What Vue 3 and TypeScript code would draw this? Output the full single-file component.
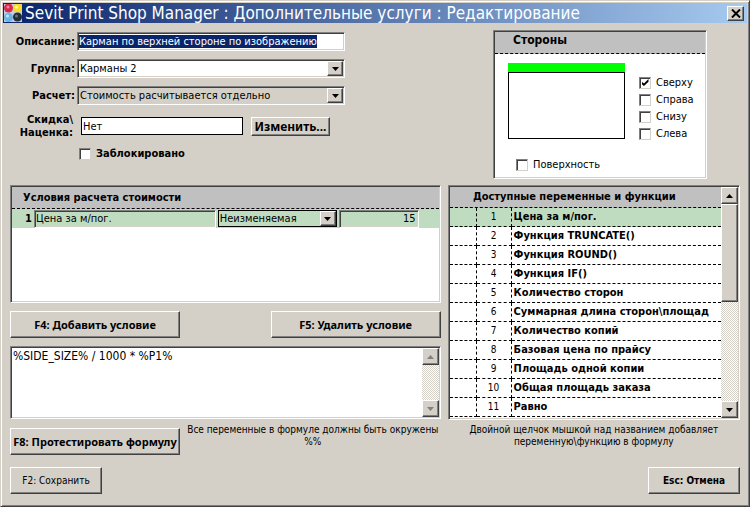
<script setup lang="ts">
import { onMounted, ref } from 'vue'

interface SideOption {
  id: string
  label: string
  checked: boolean
}

const description = ref('Карман по верхней стороне по изображению')
const group = ref('Карманы 2')
const calculation = ref('Стоимость расчитывается отдельно')
const discount = ref('Нет')
const blocked = ref(false)
const surface = ref(false)
const formula = ref('%SIDE_SIZE% / 1000 * %P1%')
const conditionName = ref('Цена за м/пог.')
const conditionKind = ref('Неизменяемая')
const conditionValue = ref('15')
const selectedIndex = ref(0)

const sides = ref<SideOption[]>([
  { id: 'top', label: 'Сверху', checked: true },
  { id: 'right', label: 'Справа', checked: false },
  { id: 'bottom', label: 'Снизу', checked: false },
  { id: 'left', label: 'Слева', checked: false },
])

const variables: string[] = [
  'Цена за м/пог.',
  'Функция TRUNCATE()',
  'Функция ROUND()',
  'Функция IF()',
  'Количество сторон',
  'Суммарная длина сторон\\площад',
  'Количество копий',
  'Базовая цена по прайсу',
  'Площадь одной копии',
  'Общая площадь заказа',
  'Равно',
]

const descriptionInput = ref<HTMLInputElement | null>(null)

onMounted(() => {
  descriptionInput.value?.focus()
  descriptionInput.value?.select()
})
</script>

<template>
  <main class="window">
    <header class="titlebar">
      <svg class="logo" viewBox="0 0 18 18" aria-hidden="true">
        <rect width="18" height="18" fill="#c4cce4" />
        <circle cx="4.5" cy="4" r="4.5" fill="#d8284c" />
        <circle cx="13.5" cy="4" r="4.5" fill="#f4dc28" />
        <circle cx="4.5" cy="13.5" r="4.5" fill="#6cb4e4" />
        <circle cx="13.5" cy="13" r="4.5" fill="#242c34" />
        <circle cx="4" cy="3" r="1.5" fill="#f080a0" />
        <circle cx="12.5" cy="3" r="1.5" fill="#fff69c" />
        <circle cx="3.5" cy="12" r="1.5" fill="#c4e8fc" />
        <circle cx="12.5" cy="12" r="1.5" fill="#68747c" />
      </svg>
      <h1>Sevit Print Shop Manager : Дополнительные услуги : Редактирование</h1>
      <button class="close" type="button" aria-label="Закрыть">
        <svg viewBox="0 0 10 9"><path d="M1 0.5 9 8.5M9 0.5 1 8.5" stroke="#000" stroke-width="2" /></svg>
      </button>
    </header>

    <div class="body">
      <form class="details" @submit.prevent>
        <label for="description">Описание:</label>
        <input id="description" ref="descriptionInput" v-model="description" class="sunken" type="text" />

        <label for="group">Группа:</label>
        <span class="combo sunken">
          <select id="group" v-model="group"><option>Карманы 2</option></select>
          <span class="arrow"><svg viewBox="0 0 7 4"><path d="M0 0H7L3.5 4Z" /></svg></span>
        </span>

        <label for="calculation">Расчет:</label>
        <span class="combo sunken locked">
          <select id="calculation" v-model="calculation"><option>Стоимость расчитывается отдельно</option></select>
          <span class="arrow"><svg viewBox="0 0 7 4"><path d="M0 0H7L3.5 4Z" /></svg></span>
        </span>

        <label class="two-line" for="discount">Скидка\<br />Наценка:</label>
        <span class="discount">
          <input id="discount" v-model="discount" type="text" />
          <button class="button" type="button">Изменить...</button>
        </span>

        <label class="check blocked"><input v-model="blocked" type="checkbox" />Заблокировано</label>
      </form>

      <section class="sides sunken">
        <h2>Стороны</h2>
        <div class="sides-body">
          <div class="preview"><div class="edge"></div><div class="sheet"></div></div>
          <div class="side-list">
            <label v-for="side in sides" :key="side.id" class="check">
              <input v-model="side.checked" type="checkbox" />{{ side.label }}
            </label>
          </div>
          <label class="check surface"><input v-model="surface" type="checkbox" />Поверхность</label>
        </div>
      </section>

      <div class="editor">
        <section class="conditions sunken">
          <h2>Условия расчета стоимости</h2>
          <div class="condition">
            <b>1</b>
            <input v-model="conditionName" class="sunken name" type="text" aria-label="Название условия" />
            <span class="combo kind">
              <select v-model="conditionKind" aria-label="Тип условия"><option>Неизменяемая</option></select>
              <span class="arrow"><svg viewBox="0 0 7 4"><path d="M0 0H7L3.5 4Z" /></svg></span>
            </span>
            <input v-model="conditionValue" class="sunken value" type="text" aria-label="Значение" />
          </div>
        </section>
        <div class="actions">
          <button class="button wide" type="button">F4: Добавить условие</button>
          <button class="button wide" type="button">F5: Удалить условие</button>
        </div>
        <div class="formula sunken">
          <textarea v-model="formula" aria-label="Формула"></textarea>
          <div class="scroll idle">
            <button class="arrow" type="button" aria-label="Вверх"><svg viewBox="0 0 7 4"><path d="M0 4H7L3.5 0Z" /></svg></button>
            <button class="arrow" type="button" aria-label="Вниз"><svg viewBox="0 0 7 4"><path d="M0 0H7L3.5 4Z" /></svg></button>
          </div>
        </div>
      </div>

      <section class="variables sunken">
        <table>
          <colgroup><col class="mark" /><col class="number" /><col /></colgroup>
          <thead><tr><th colspan="3">Доступные переменные и функции</th></tr></thead>
          <tbody>
            <tr v-for="(item, index) in variables" :key="item" :class="{ current: index === selectedIndex }" @click="selectedIndex = index">
              <td></td>
              <td>{{ index + 1 }}</td>
              <td>{{ item }}</td>
            </tr>
          </tbody>
        </table>
        <div class="scroll">
          <button class="arrow" type="button" aria-label="Вверх"><svg viewBox="0 0 7 4"><path d="M0 4H7L3.5 0Z" /></svg></button>
          <div class="thumb"></div>
          <button class="arrow" type="button" aria-label="Вниз"><svg viewBox="0 0 7 4"><path d="M0 0H7L3.5 4Z" /></svg></button>
        </div>
      </section>

      <div class="test">
        <button class="button wide" type="button">F8: Протестировать формулу</button>
        <p>Все переменные в формуле должны быть окружены %%</p>
      </div>
      <p class="hint">Двойной щелчок мышкой над названием добавляет переменную\функцию в формулу</p>
    </div>

    <footer>
      <button class="button plain" type="button">F2: Сохранить</button>
      <button class="button" type="button">Esc: Отмена</button>
    </footer>
  </main>
</template>

<style>
body {
  background: #d4d0c8;
}
</style>

<style scoped>
* {
  box-sizing: border-box;
}

.window {
  display: flex;
  flex-direction: column;
  min-height: 100vh;
  padding: 1px;
  border: 1px solid;
  border-color: #d4d0c8 #404040 #404040 #d4d0c8;
  box-shadow: inset 1px 1px #fff, inset -1px -1px #808080;
  background: #d4d0c8;
  color: #000;
  font-family: 'DejaVu Sans Condensed', 'DejaVu Sans', sans-serif;
  font-size: 11px;
  line-height: 14px;
}

input,
select,
textarea,
button {
  margin: 0;
  padding: 0;
  border: 0;
  border-radius: 0;
  outline: 0;
  appearance: none;
  background: transparent;
  color: inherit;
  font: inherit;
  min-width: 0;
}

h1,
h2,
p {
  margin: 0;
}

.titlebar {
  display: flex;
  align-items: center;
  gap: 3px;
  height: 20px;
  margin: 1px;
  padding: 0 3px 0 1px;
  background: linear-gradient(90deg, #0a246a, #a6caf0);
  color: #fff;
}

.logo {
  width: 18px;
  height: 18px;
}

h1 {
  flex: 1;
  font-size: 17px;
  line-height: 20px;
  font-weight: 400;
  white-space: nowrap;
}

.close,
.arrow,
.button,
.thumb {
  border: 1px solid;
  border-color: #fff #404040 #404040 #fff;
  box-shadow: inset -1px -1px #808080;
  background: #d4d0c8;
}

.close {
  display: grid;
  place-items: center;
  width: 17px;
  height: 15px;
}

.close svg {
  width: 10px;
  height: 9px;
}

.body {
  display: grid;
  grid-template-columns: minmax(0, 430fr) minmax(0, 292fr);
  column-gap: 7px;
  padding: 6px 8px 0;
}

.sunken {
  border: 1px solid;
  border-color: #808080 #fff #fff #808080;
  box-shadow: inset 1px 1px #404040, inset -1px -1px #d4d0c8;
}

.details {
  display: grid;
  grid-template-columns: 65px 268px;
  grid-template-rows: 19px 19px 19px 26px 14px;
  gap: 8px 2px;
  align-items: center;
  align-content: start;
  padding-top: 2px;
  font-weight: 700;
}

.details > label:not(.check) {
  text-align: right;
  white-space: nowrap;
  justify-self: end;
}

.details .two-line {
  line-height: 13px;
  padding-right: 2px;
}

.details input[type='text'],
.combo select {
  width: 100%;
  height: 100%;
  padding-left: 1px;
  font-weight: 400;
}

.details input[type='text'] {
  background: #fff;
}

#description::selection {
  background: #0a246a;
  color: #fff;
}

.combo {
  display: grid;
  grid-template-columns: minmax(0, 1fr);
  height: 19px;
  padding: 1px;
  background: #fff;
}

.combo > * {
  grid-area: 1 / 1;
}

.combo .arrow {
  justify-self: end;
  pointer-events: none;
}

.locked {
  background: #d4d0c8;
}

.arrow {
  display: grid;
  place-items: center;
  width: 16px;
}

.arrow svg {
  width: 7px;
  height: 4px;
}

.discount {
  display: flex;
  gap: 8px;
  height: 18px;
  padding-left: 4px;
}

.details .discount input {
  width: 162px;
  border: 1px solid #000;
}

.discount .button {
  width: 79px;
  height: 19px;
  font-size: 12px;
}

.button {
  height: 27px;
  font-family: 'Noto Sans', 'DejaVu Sans Condensed', sans-serif;
  font-size: 11px;
  font-weight: 700;
  white-space: nowrap;
}

.check {
  display: flex;
  align-items: center;
  gap: 5px;
}

.check input {
  flex: none;
  width: 12px;
  height: 12px;
  border: 1px solid;
  border-color: #808080 #d4d0c8 #d4d0c8 #808080;
  box-shadow: inset 1px 1px #404040;
  background: #fff;
}

.check input:checked {
  display: grid;
  place-items: center;
}

.check input:checked::before {
  content: '';
  width: 7px;
  height: 7px;
  background: #000;
  clip-path: polygon(0 35%, 35% 65%, 100% 0, 100% 40%, 35% 100%, 0 70%);
}

.blocked {
  grid-column: 2;
  padding-left: 2px;
}

.sides {
  justify-self: end;
  width: 214px;
  height: 149px;
  margin: 0 33px 6px 0;
  padding: 1px;
  background: #fff;
}

h2 {
  height: 22px;
  border-bottom: 1px dashed #000;
  background: #c0c0c0;
  font-size: 12px;
  line-height: 17px;
}

.sides h2 {
  padding-left: 18px;
}

.sides-body {
  display: grid;
  grid-template-columns: 117px 1fr;
  column-gap: 14px;
  padding: 9px 0 0 13px;
}

.edge {
  height: 9px;
  background: #0f0;
}

.sheet {
  height: 67px;
  border: 1px solid #000;
}

.side-list {
  display: grid;
  grid-auto-rows: 17px;
  padding-top: 11px;
}

.surface {
  grid-column: 1 / 3;
  padding: 16px 0 0 8px;
}

.editor {
  display: flex;
  flex-direction: column;
  gap: 8px;
}

.conditions {
  height: 118px;
  padding: 1px;
  background: #fff;
}

.conditions h2 {
  padding-left: 11px;
  font-size: 11px;
  line-height: 22px;
}

.condition {
  display: grid;
  grid-template-columns: 20px minmax(0, 182fr) minmax(0, 119fr) minmax(0, 80fr) 18px;
  gap: 2px;
  height: 19px;
  padding: 1px 0;
  background: #c0dcc0;
}

.condition b {
  text-align: right;
  line-height: 18px;
}

.condition .combo {
  height: 17px;
  border: 1px solid #000;
  padding: 0;
  background: #c0dcc0;
}

.name {
  padding-left: 1px;
}

.value {
  padding-right: 2px;
  text-align: right;
}

.actions {
  display: flex;
  justify-content: space-between;
}

.wide {
  flex: none;
  width: 170px;
}

.formula {
  display: flex;
  height: 73px;
  padding: 1px;
  background: #fff;
}

textarea {
  flex: 1;
  padding: 1px;
  font-size: 12px;
  resize: none;
  overflow: hidden;
}

.scroll {
  display: flex;
  flex-direction: column;
  justify-content: space-between;
  flex: none;
  width: 17px;
  background: repeating-conic-gradient(#fff 0 25%, #d4d0c8 0 50%) 0 0 / 2px 2px;
}

.scroll .arrow {
  width: 17px;
  height: 17px;
}

.idle .arrow {
  color: #808080;
}

.arrow path {
  fill: currentColor;
}

.thumb {
  height: 98px;
  margin-bottom: auto;
}

.variables {
  display: flex;
  height: 235px;
  padding: 1px;
  background: #fff;
}

table {
  flex: 1;
  width: 0;
  table-layout: fixed;
  border-collapse: separate;
  border-spacing: 0;
  align-self: flex-start;
}

.mark {
  width: 27px;
}

.number {
  width: 35px;
}

th {
  height: 21px;
  padding: 0 22px 0 0;
  border-bottom: 1px dashed #000;
  background: #c0c0c0;
  white-space: nowrap;
}

td {
  height: 19px;
  padding: 0;
  border-bottom: 1px dashed #000;
  overflow: hidden;
  white-space: nowrap;
}

td:not(:last-child) {
  border-right: 1px dashed #000;
}

td:nth-child(2) {
  font-size: 10px;
  text-align: center;
}

td:last-child {
  padding-left: 2px;
  font-weight: 700;
}

.current {
  background: #c0dcc0;
}

.test {
  display: flex;
  gap: 5px;
  padding-top: 8px;
}

.test p,
.hint {
  flex: 1;
  padding-top: 4px;
  font-size: 10px;
  line-height: 12px;
  text-align: center;
}

.test p {
  padding-top: 0;
  margin-top: -4px;
}

.hint {
  padding-inline: 12px;
}

footer {
  display: flex;
  justify-content: space-between;
  padding: 12px 8px 10px;
}

footer .button {
  width: 92px;
  font-family: inherit;
  font-size: 10px;
}

.plain {
  font-weight: 400;
}
</style>
